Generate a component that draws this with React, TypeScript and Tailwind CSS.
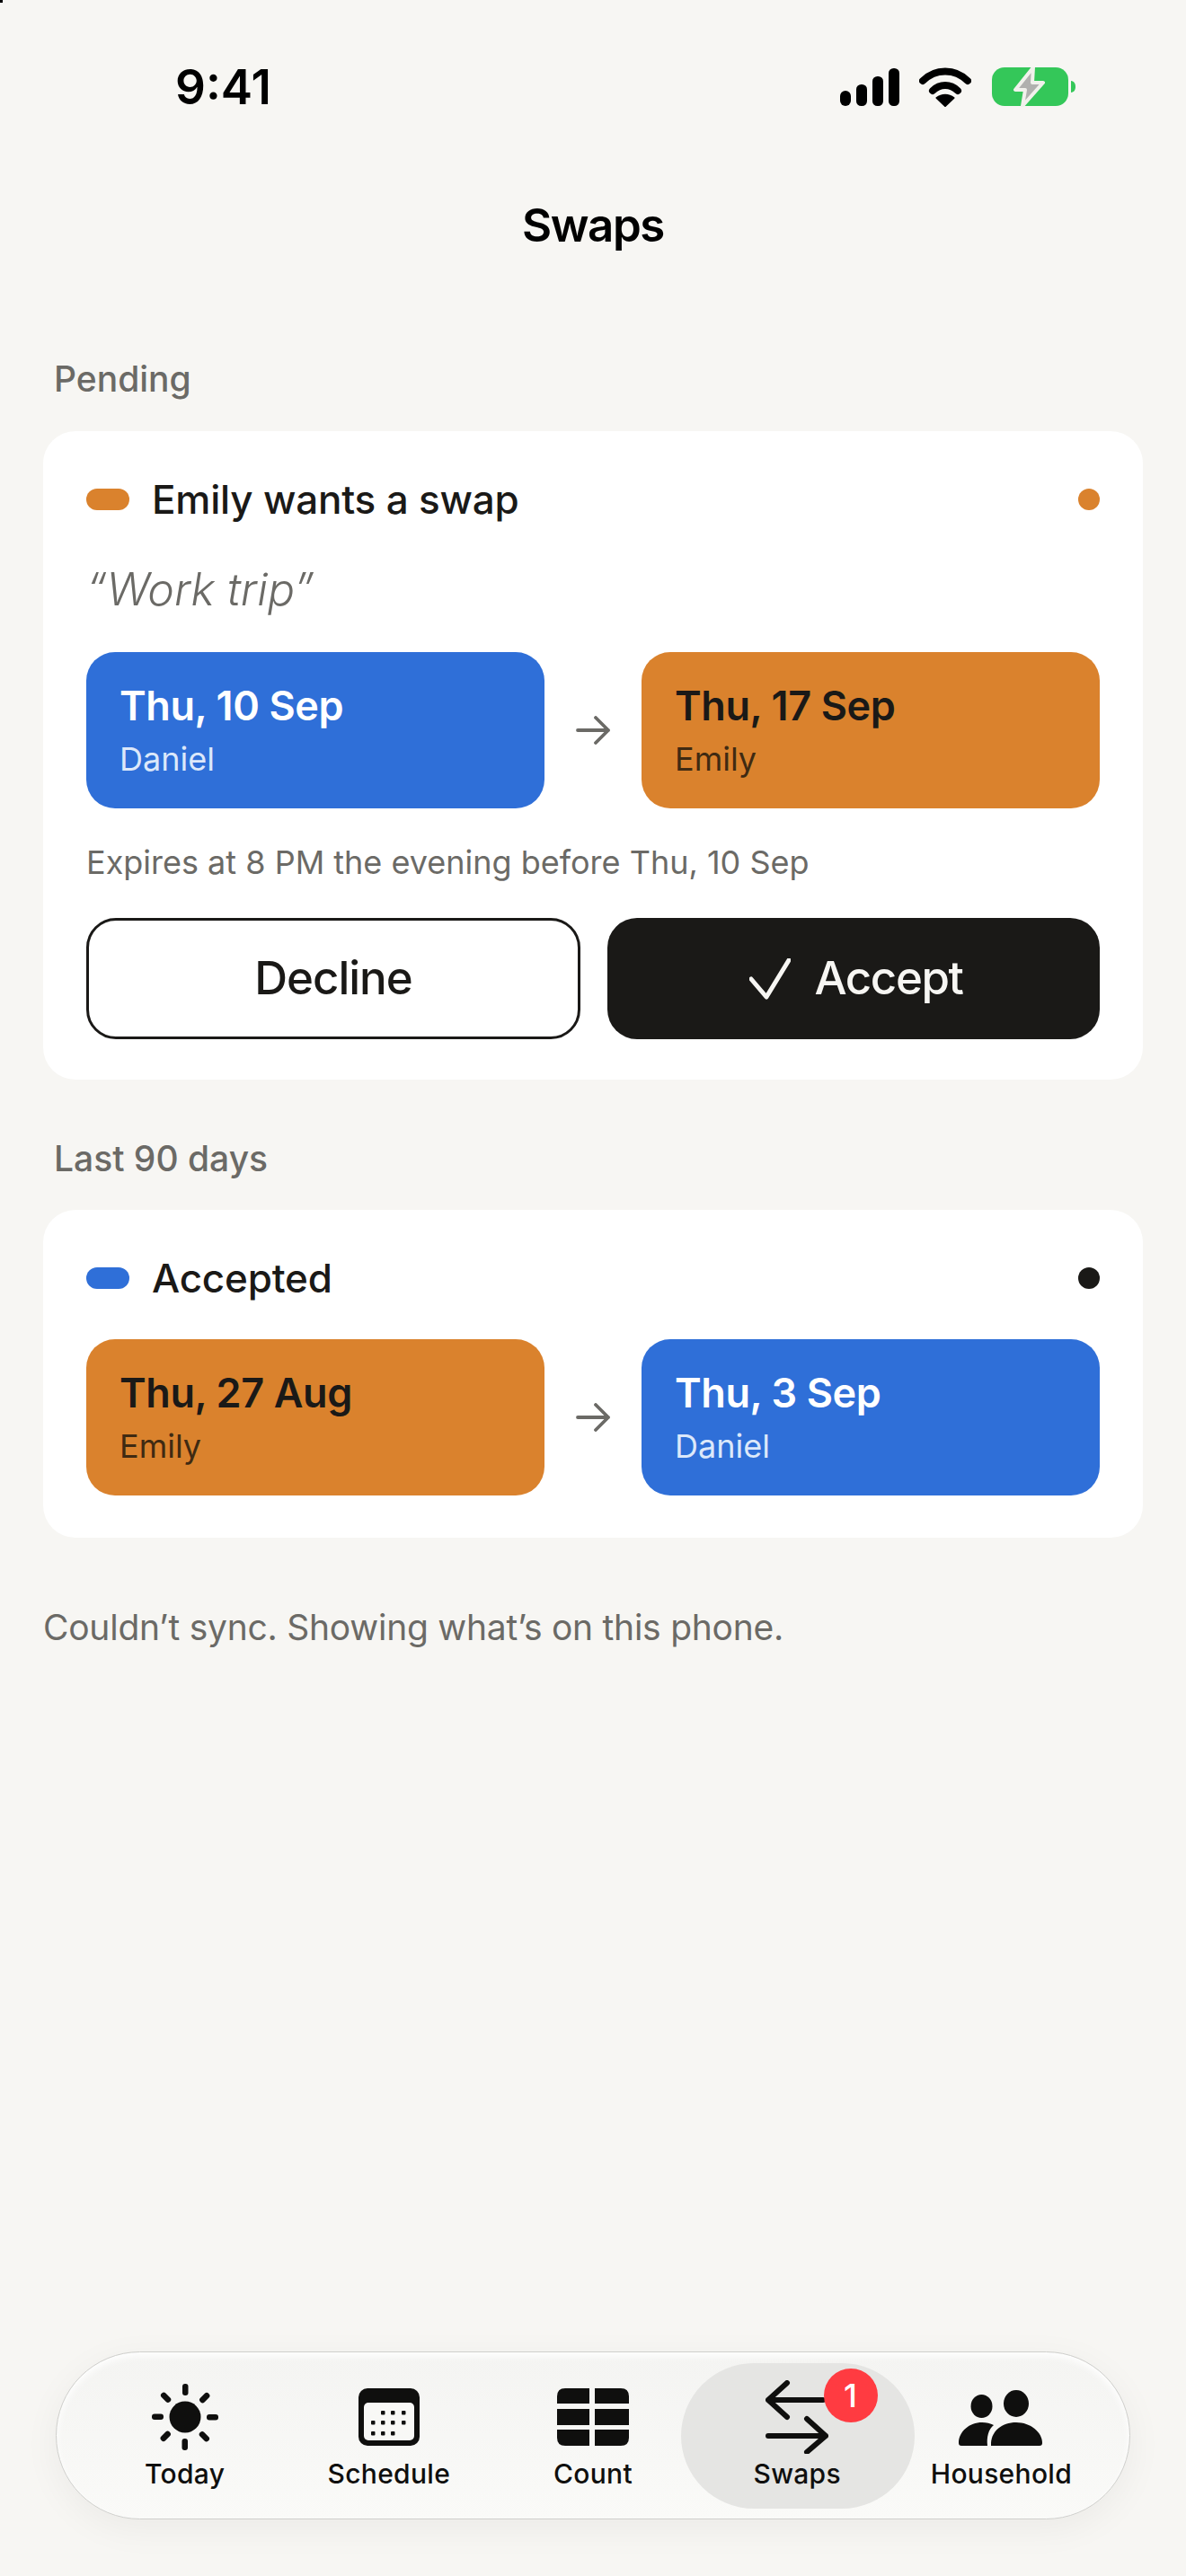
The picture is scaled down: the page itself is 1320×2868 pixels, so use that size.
import React from "react";

function StatusIcons() {
  return (
    <div className="flex items-center">
      <svg width="66" height="42" viewBox="0 0 66 42" fill="#000" className="mr-[22px]">
        <rect x="0" y="25" width="12" height="17" rx="6" />
        <rect x="18" y="18" width="12" height="24" rx="5.5" />
        <rect x="36" y="9" width="12" height="33" rx="5.5" />
        <rect x="54" y="0" width="12" height="42" rx="5.5" />
      </svg>
      <svg width="58" height="44" viewBox="0 0 58 44" fill="none" className="mr-[23px]">
        <path d="M4 15 C18 1 40 1 54 15" stroke="#000" strokeWidth="8" strokeLinecap="round" />
        <path d="M15 26 C23 18 35 18 43 26" stroke="#000" strokeWidth="8" strokeLinecap="round" />
        <path d="M29 43 L19.5 34 C25 29.5 33 29.5 38.5 34 Z" fill="#000" stroke="#000" strokeWidth="2" strokeLinejoin="round" />
      </svg>
      <svg width="94" height="44" viewBox="0 0 94 44" fill="none">
        <rect x="0" y="0" width="85" height="43" rx="14" fill="#34C759" />
        <path d="M88 15 C91.500 15.500 93 18 93 21.500 C93 25 91.500 27.500 88 28 Z" fill="#34C759" />
        <path d="M46 0 L26 25 H37 L34 43 L57 17 H45 Z" fill="#B0B0AE" stroke="#F1F1EC" strokeWidth="4" strokeLinejoin="round" />
      </svg>
    </div>
  );
}

function Block({ date, name, color }: { date: string; name: string; color: "blue" | "orange" }) {
  const blue = color === "blue";
  return (
    <div className={`flex-1 h-[174px] rounded-[32px] pl-[37px] pt-[30px] ${blue ? "bg-[#2F6FD8]" : "bg-[#DA822D]"}`}>
      <div className={`text-[45px] leading-[60px] font-semibold tracking-[-0.4px] ${blue ? "text-white" : "text-[#1A1917]"}`}>{date}</div>
      <div className={`text-[36px] leading-[48px] mt-[5px] ${blue ? "text-[#DCE8FA]" : "text-[#3F2A12]"}`}>{name}</div>
    </div>
  );
}

function ArrowRow({ a, b }: { a: React.ReactNode; b: React.ReactNode }) {
  return (
    <div className="flex items-center">
      {a}
      <div className="w-[108px] flex justify-center">
        <svg width="38" height="32" viewBox="0 0 38 32" fill="none" stroke="#6B6A66" strokeWidth="3.800" strokeLinecap="round" strokeLinejoin="round">
          <path d="M2 16 H36 M22 2 L36 16 L22 30" />
        </svg>
      </div>
      {b}
    </div>
  );
}

function CardHead({ title, pill, dot }: { title: string; pill: string; dot: string }) {
  return (
    <div className="flex items-center h-[60px]">
      <div className={`w-[48px] h-[24px] rounded-full ${pill}`} />
      <div className="ml-[25px] text-[44px] font-medium tracking-[-0.2px] text-[#1A1917] leading-[60px]">{title}</div>
      <div className={`ml-auto w-[24px] h-[24px] rounded-full ${dot}`} />
    </div>
  );
}

function SunIcon() {
  const rays = [0, 45, 90, 135, 180, 225, 270, 315];
  return (
    <svg width="76" height="76" viewBox="0 0 76 76" fill="#0F0F0E">
      <circle cx="38" cy="38" r="17.500" />
      {rays.map((r) => (
        <rect key={r} x="35" y="1" width="6.500" height="13" rx="3" transform={`rotate(${r} 38 38)`} />
      ))}
    </svg>
  );
}

function CalendarIcon() {
  const dots: [number, number][] = [
    [27, 27], [38, 27], [50, 27],
    [16, 38], [27, 38], [38, 38], [50, 38],
    [16, 50], [27, 50], [38, 50],
  ];
  return (
    <svg width="68" height="64" viewBox="0 0 68 64">
      <rect width="68" height="64" rx="10" fill="#0F0F0E" />
      <rect x="6" y="16" width="56" height="42" rx="5" fill="#F8F8F6" />
      {dots.map(([x, y]) => (
        <rect key={`${x}-${y}`} x={x - 2} y={y - 2} width="4.500" height="4.500" rx="1" fill="#0F0F0E" />
      ))}
    </svg>
  );
}

function CountIcon() {
  return (
    <svg width="80" height="64" viewBox="0 0 80 64" fill="#0F0F0E">
      <path d="M9 0 H36 V17 H0 V9 Q0 0 9 0 Z" />
      <path d="M42 0 H71 Q80 0 80 9 V17 H42 Z" />
      <rect x="0" y="23" width="36" height="18" />
      <rect x="42" y="23" width="38" height="18" />
      <path d="M0 46 H36 V64 H9 Q0 64 0 55 Z" />
      <path d="M42 46 H80 V55 Q80 64 71 64 H42 Z" />
    </svg>
  );
}

function SwapsIcon() {
  return (
    <svg width="70" height="82" viewBox="0 0 70 82" fill="none" stroke="#0F0F0E" strokeWidth="6" strokeLinecap="round" strokeLinejoin="round">
      <path d="M3 22 H64 M24 3 L3 22 L24 41" />
      <path d="M3 62 H67 M46 43 L67 62 L46 80" />
    </svg>
  );
}

function HouseholdIcon() {
  return (
    <svg width="94" height="64" viewBox="0 0 94 64" fill="#0F0F0E">
      <ellipse cx="25.500" cy="20" rx="12" ry="13" />
      <ellipse cx="64" cy="17" rx="14" ry="15" />
      <path d="M0 61 C0 48 12 38 26 38 C31 38 35 39 39 41 C33 46 31 54 32 64 H3 Q0 64 0 61 Z" />
      <path d="M36 64 C35 48 48 38 64 38 C80 38 93 49 93 61 Q93 64 90 64 Z" />
    </svg>
  );
}

function Tab({ label, icon, iconClass, active }: { label: string; icon: React.ReactNode; iconClass: string; active?: boolean }) {
  return (
    <div className="relative flex flex-col items-center">
      {active && <div className="absolute left-[-16px] right-[-17px] top-0 bottom-0 rounded-[81px] bg-[#E5E5E3]" />}
      <div className={`relative h-[103px] flex items-end justify-center ${iconClass}`}>{icon}</div>
      <div className="relative text-[30px] leading-[40px] font-medium text-[#0F0F0E] tracking-[0.3px]">{label}</div>
      {active && (
        <div className="absolute left-[143px] top-[6px] w-[60px] h-[60px] rounded-full bg-[#FF3B41] flex items-center justify-center text-white text-[36px] font-medium">
          1
        </div>
      )}
    </div>
  );
}

export default function App() {
  return (
    <div className="relative h-[2868px] w-[1320px] bg-[#F7F6F3] flex flex-col font-['Inter','Liberation_Sans',sans-serif] overflow-hidden">
      <div className="absolute left-0 top-0 w-[3px] h-[3px] bg-black" />
      <div className="h-[194px] shrink-0 flex items-center justify-between pl-[195px] pr-[122px]">
        <div className="text-[53px] font-semibold text-black leading-none">9:41</div>
        <StatusIcons />
      </div>
      <div className="h-[145px] flex items-start justify-center text-[51px] font-semibold tracking-[-1.4px] text-black leading-[60px] mt-[27px]">Swaps</div>

      <div className="px-[48px] mt-[32px]">
        <div className="pl-[12px] text-[39px] leading-[48px] font-medium text-[#6B6A66]">Pending</div>
        <div className="mt-[34px] bg-white rounded-[36px] px-[48px] pt-[46px] h-[722px]">
          <CardHead title="Emily wants a swap" pill="bg-[#DA822D]" dot="bg-[#DA822D]" />
          <div className="mt-[40px] text-[50px] leading-[60px] italic text-[#6B6A66] font-light">“Work trip”</div>
          <div className="mt-[40px]">
            <ArrowRow
              a={<Block date="Thu, 10 Sep" name="Daniel" color="blue" />}
              b={<Block date="Thu, 17 Sep" name="Emily" color="orange" />}
            />
          </div>
          <div className="mt-[36px] text-[36px] leading-[48px] text-[#6B6A66]">Expires at 8 PM the evening before Thu, 10 Sep</div>
          <div className="mt-[38px] flex gap-[30px]">
            <div className="w-[550px] h-[135px] rounded-[33px] border-[3px] border-[#1A1917] flex items-center justify-center text-[51px] font-medium tracking-[-1px] text-[#1A1917]">
              Decline
            </div>
            <div className="flex-1 h-[135px] rounded-[33px] bg-[#1A1917] flex items-center justify-center text-[51px] font-medium tracking-[-1.4px] text-[#F7F6F3]">
              <svg width="46" height="46" viewBox="0 0 46 46" fill="none" stroke="#F7F6F3" strokeWidth="5" strokeLinecap="round" strokeLinejoin="round" className="ml-[6px] mr-[26px]">
                <path d="M2 23 L19 43 L44 2" />
              </svg>
              Accept
            </div>
          </div>
        </div>

        <div className="pl-[12px] mt-[64px] text-[39px] leading-[48px] font-medium text-[#6B6A66]">Last 90 days</div>
        <div className="mt-[33px] bg-white rounded-[36px] px-[48px] pt-[46px] h-[365px]">
          <CardHead title="Accepted" pill="bg-[#2F6FD8]" dot="bg-[#1A1917]" />
          <div className="mt-[38px]">
            <ArrowRow
              a={<Block date="Thu, 27 Aug" name="Emily" color="orange" />}
              b={<Block date="Thu, 3 Sep" name="Daniel" color="blue" />}
            />
          </div>
        </div>
        <div className="mt-[76px] text-[39px] leading-[48px] tracking-[-0.25px] text-[#6B6A66]">Couldn’t sync. Showing what’s on this phone.</div>
      </div>

      <div className="mt-auto mb-[63px] mx-[62px] h-[187px] rounded-[94px] bg-linear-to-b from-[#F4F4F2] to-[#FAFAF8] border border-[#CFCFCC] shadow-[0_10px_40px_rgba(0,0,0,0.05),inset_0_4px_8px_#ffffff] px-[29px] pt-[12px]">
        <div className="grid grid-cols-5 h-[162px]">
          <Tab label="Today" icon={<SunIcon />} iconClass="pb-[5px]" />
          <Tab label="Schedule" icon={<CalendarIcon />} iconClass="pb-[11px]" />
          <Tab label="Count" icon={<CountIcon />} iconClass="pb-[11px]" />
          <Tab label="Swaps" icon={<SwapsIcon />} iconClass="pb-[2px]" active />
          <Tab label="Household" icon={<HouseholdIcon />} iconClass="pb-[11px]" />
        </div>
      </div>
    </div>
  );
}
